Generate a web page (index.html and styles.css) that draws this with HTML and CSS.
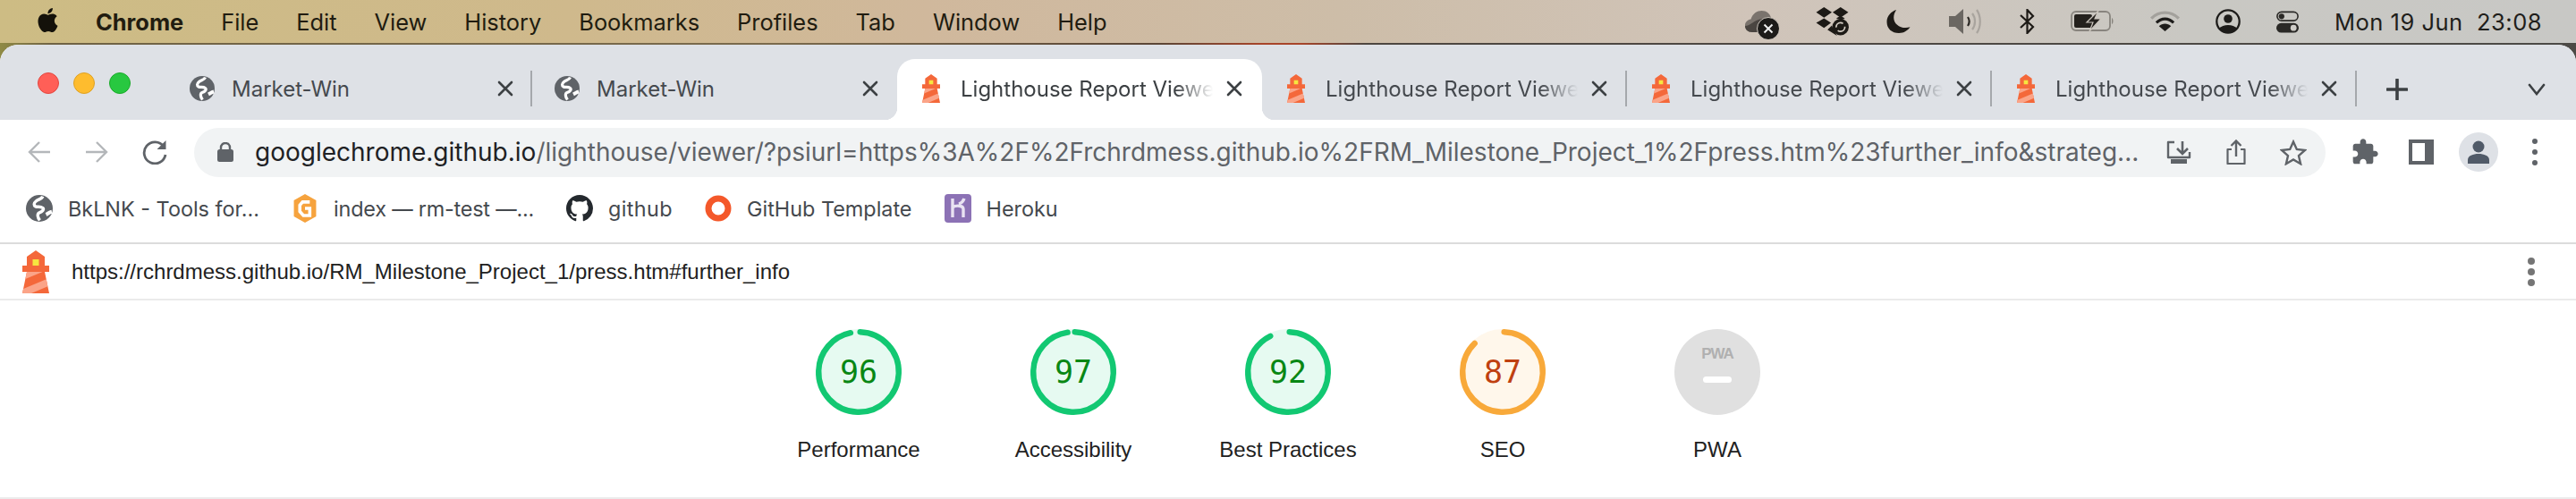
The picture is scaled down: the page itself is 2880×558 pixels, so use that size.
FILE: index.html
```html
<!DOCTYPE html>
<html lang="en">
<head>
<meta charset="utf-8">
<title>Lighthouse Report Viewer</title>
<link rel="stylesheet" href="styles.css">
</head>
<body>
<svg class="defs" width="0" height="0" aria-hidden="true">
  <defs>
    <symbol id="lh" viewBox="9 0 30 48">
      <path d="m14 7 10-7 10 7v10h5v7h-5l5 24H9l5-24H9v-7h5V7Z" fill="#F4683A"/>
      <path d="M31.561 24H14l-1.689 8.105L31.561 24ZM18.983 48H9l1.022-4.907L35.723 32.27l1.663 7.98L18.983 48Z" fill="#FBA488"/>
      <path fill="#F6E640" d="M20.5 10h7v7h-7z"/>
    </symbol>
    <symbol id="globe" viewBox="0 0 28 28">
      <circle cx="14" cy="14" r="14" fill="#5f6368"/>
      <path d="M17.500 1.500C16.500 4.500 13 4.500 10.500 6.500C8 8.500 8 11 10 12C12 13 15 11.500 17.500 13.500C19.500 15 17 17.500 14 18.500C11.500 19.500 12 23.500 14.500 26.500" fill="none" stroke="#fff" stroke-width="3.200"/>
      <path d="M21 20.500C23 19.500 24.500 18 27 17.500" fill="none" stroke="#fff" stroke-width="4"/>
    </symbol>
    <symbol id="close" viewBox="0 0 18 18">
      <path d="M2 2 16 16M16 2 2 16" stroke="#3c4043" stroke-width="2.600" stroke-linecap="round" fill="none"/>
    </symbol>
  </defs>
</svg>

<header class="menubar">
  <svg class="apple" viewBox="0 0 24 24"><path fill="#14110a" d="M12.152 6.896c-.948 0-2.415-1.078-3.96-1.04-2.04.027-3.91 1.183-4.961 3.014-2.117 3.675-.546 9.103 1.519 12.09 1.013 1.454 2.208 3.09 3.792 3.039 1.52-.065 2.09-.987 3.935-.987 1.831 0 2.35.987 3.96.948 1.637-.026 2.676-1.48 3.676-2.948 1.156-1.688 1.636-3.325 1.662-3.415-.039-.013-3.182-1.221-3.22-4.857-.026-3.04 2.48-4.494 2.597-4.559-1.429-2.09-3.623-2.324-4.39-2.376-2-.156-3.675 1.09-4.61 1.09zM15.53 3.83c.843-1.012 1.4-2.427 1.245-3.83-1.207.052-2.662.805-3.532 1.818-.78.896-1.454 2.338-1.273 3.714 1.338.104 2.715-.688 3.559-1.701"/></svg>
  <nav class="menus">
    <span class="menu-app">Chrome</span>
    <span>File</span><span>Edit</span><span>View</span><span>History</span><span>Bookmarks</span><span>Profiles</span><span>Tab</span><span>Window</span><span>Help</span>
  </nav>
  <div class="status">
    <svg class="st-cloud" viewBox="0 0 38 34">
      <path d="M8 26C3 26 0 22.500 0 18.500C0 14.500 3 12 6.500 11.500C8.500 5 13.500 2 18.500 2C24 2 28 5.500 29 10C33 11 36 14 36 18C36 22 33 26 28 26Z" fill="#7a736d"/>
      <path d="M0 19C6 19 10 12 19 11C27 10 32 12 36 18C36 22 33 26 28 26H8C3 26 0 23 0 19Z" fill="#4a4541"/>
      <circle cx="26" cy="22" r="12.500" fill="#1d1b19" stroke="#cdc6be" stroke-width="1"/>
      <path d="M21.500 17.500 30.500 26.500M30.500 17.500 21.500 26.500" stroke="#eee" stroke-width="2"/>
    </svg>
    <svg class="st-drop" viewBox="0 0 39 34">
      <path d="M10 0 19 6 10 12 1 6ZM29 0 38 6 29 12 20 6ZM10 13 18 18 10 24 1 18ZM19 21 20 24 25 33 14 26Z" fill="#1d1a16"/>
      <path d="M24 13 29 10 34 13 30 15Z" fill="#1d1a16"/>
      <circle cx="29" cy="23" r="9.500" fill="#1d1a16"/>
      <circle cx="29" cy="23" r="5" fill="none" stroke="#d6cfc6" stroke-width="1.800" stroke-dasharray="11 4"/>
    </svg>
    <svg class="st-moon" viewBox="0 0 30 28"><path d="M12 0C6 2 1 7 1 14C1 22 7 27 15 27C21 27 25 24 28 20C18 23 9 17 9 9C9 6 10 3 12 0Z" fill="#1d1a16"/></svg>
    <svg class="st-speaker" viewBox="0 0 40 34">
      <path d="M1 11H8L17 3V31L8 23H1Z" fill="#6b6762"/>
      <path d="M22 12C24 15 24 19 22 22" stroke="#2a2723" stroke-width="2.200" fill="none"/>
      <path d="M27 8C31 13 31 21 27 26M32 4C37 11 37 23 32 30" stroke="#a9a49e" stroke-width="2.200" fill="none"/>
    </svg>
    <svg class="st-bt" viewBox="0 0 17 28"><path d="M1 7 15 20 8.500 27V1L15 8 1 21" stroke="#1d1a16" stroke-width="2.200" fill="none"/></svg>
    <svg class="st-batt" viewBox="0 0 49 24">
      <rect x="1" y="1" width="43" height="21" rx="5" fill="none" stroke="#88847e" stroke-width="1.800"/>
      <rect x="4" y="4" width="20" height="15" rx="2" fill="#24211d"/>
      <path d="M46 8C48 9 48 14 46 15Z" fill="#88847e"/>
      <path d="M31 0 18 13H25L21 23 34 9H27Z" fill="#24211d" stroke="#cbc5bd" stroke-width="1.200"/>
    </svg>
    <svg class="st-wifi" viewBox="0 0 34 25">
      <path d="M1 9C10 0 24 0 33 9" stroke="#a3a19c" stroke-width="3.500" fill="none"/>
      <path d="M7 14C13 8 21 8 27 14" stroke="#1d1c1a" stroke-width="3.200" fill="none"/>
      <path d="M17 24 10 18C14 14 20 14 24 18Z" fill="#1d1c1a"/>
    </svg>
    <svg class="st-user" viewBox="0 0 28 28">
      <circle cx="14" cy="14" r="12.700" fill="none" stroke="#1d1c1a" stroke-width="2.300"/>
      <circle cx="14" cy="11" r="4.800" fill="#1d1c1a"/>
      <path d="M4 22C8 16.500 20 16.500 24 22C18 28 10 28 4 22Z" fill="#1d1c1a"/>
    </svg>
    <svg class="st-toggle" viewBox="0 0 28 27">
      <rect x="1" y="1" width="26" height="11" rx="5.500" fill="none" stroke="#2a2926" stroke-width="1.800"/>
      <circle cx="6.500" cy="6.500" r="3.500" fill="#2a2926"/>
      <rect y="15" width="28" height="12" rx="6" fill="#2a2926"/>
      <circle cx="21.500" cy="21" r="3.800" fill="#cfcdc8"/>
    </svg>
    <span class="clock">Mon 19 Jun&nbsp;&nbsp;23:08</span>
  </div>
</header>

<main class="window">
  <div class="tabstrip">
    <div class="traffic"><i class="light red"></i><i class="light amber"></i><i class="light green"></i></div>
    <div class="tab"><svg class="fav-globe"><use href="#globe"/></svg><span class="tab-title">Market-Win</span><svg class="tab-x"><use href="#close"/></svg><i class="tab-sep"></i></div>
    <div class="tab"><svg class="fav-globe"><use href="#globe"/></svg><span class="tab-title">Market-Win</span><svg class="tab-x"><use href="#close"/></svg><i class="tab-sep tab-sep-off"></i></div>
    <div class="tab tab-active"><svg class="fav-lh"><use href="#lh"/></svg><span class="tab-title tab-fade">Lighthouse Report Viewer</span><svg class="tab-x"><use href="#close"/></svg><i class="tab-sep tab-sep-off"></i></div>
    <div class="tab"><svg class="fav-lh"><use href="#lh"/></svg><span class="tab-title tab-fade">Lighthouse Report Viewer</span><svg class="tab-x"><use href="#close"/></svg><i class="tab-sep"></i></div>
    <div class="tab"><svg class="fav-lh"><use href="#lh"/></svg><span class="tab-title tab-fade">Lighthouse Report Viewer</span><svg class="tab-x"><use href="#close"/></svg><i class="tab-sep"></i></div>
    <div class="tab"><svg class="fav-lh"><use href="#lh"/></svg><span class="tab-title tab-fade">Lighthouse Report Viewer</span><svg class="tab-x"><use href="#close"/></svg><i class="tab-sep"></i></div>
    <svg class="newtab" viewBox="0 0 24 24"><path d="M12 1V23M1 12H23" stroke="#3c4043" stroke-width="3.600" stroke-linecap="round"/></svg>
    <svg class="tabmenu" viewBox="0 0 20 14"><path d="M2 2 10 12 18 2" stroke="#3c4043" stroke-width="2.600" fill="none" stroke-linecap="round"/></svg>
  </div>

  <div class="toolbar">
    <svg class="nav-btn" viewBox="0 0 26 26"><path d="M25 13H2M13 2 2 13 13 24" stroke="#b4b7ba" stroke-width="2.400" fill="none"/></svg>
    <svg class="nav-btn nav-fwd" viewBox="0 0 26 26"><path d="M1 13H24M13 2 24 13 13 24" stroke="#b4b7ba" stroke-width="2.400" fill="none"/></svg>
    <svg class="nav-btn nav-reload" viewBox="0 0 28 28"><path d="M24 8A12 12 0 1 0 26 17" stroke="#5f6368" stroke-width="2.800" fill="none"/><path d="M26.500 1V11H16.500Z" fill="#5f6368"/></svg>
    <div class="omnibox">
      <svg class="lock" viewBox="0 0 18 22"><path d="M4 9V6A5 5 0 0 1 14 6V9" stroke="#5f6368" stroke-width="2.400" fill="none"/><rect y="8" width="18" height="14" rx="2.500" fill="#5f6368"/></svg>
      <div class="url"><span class="url-host">googlechrome.github.io</span>/lighthouse/viewer/?psiurl=https%3A%2F%2Frchrdmess.github.io%2FRM_Milestone_Project_1%2Fpress.htm%23further_info&amp;strateg...</div>
      <svg class="omni-dl" viewBox="0 0 28 26"><path d="M9 2H2V19H26V13" stroke="#5f6368" stroke-width="2.400" fill="none" stroke-linejoin="round"/><path d="M18 1V14M12 9 18 15 24 9" stroke="#5f6368" stroke-width="2.600" fill="none"/><rect x="5" y="21" width="18" height="5" fill="#5f6368"/></svg>
      <svg class="omni-share" viewBox="0 0 22 28"><path d="M6 11H1.500V27H20.500V11H16" stroke="#5f6368" stroke-width="2.200" fill="none" stroke-linejoin="round"/><path d="M11 19V2M5.500 7 11 1.500 16.500 7" stroke="#5f6368" stroke-width="2.400" fill="none"/></svg>
      <svg class="omni-star" viewBox="0 0 30 29"><path d="M15 2.500 18.800 11 28 12 21 18.200 23.100 27.200 15 22.500 6.900 27.200 9 18.200 2 12 11.200 11Z" stroke="#5f6368" stroke-width="2.400" fill="none"/></svg>
    </div>
    <svg class="tool-puzzle" viewBox="0 0 24 24"><path fill="#5f6368" d="M20.500 11H19V7c0-1.100-.9-2-2-2h-4V3.500C13 2.120 11.880 1 10.500 1S8 2.120 8 3.500V5H4c-1.100 0-1.990.9-1.990 2v3.800H3.500c1.490 0 2.700 1.210 2.700 2.700s-1.210 2.700-2.700 2.700H2V20c0 1.100.9 2 2 2h3.800v-1.500c0-1.490 1.210-2.700 2.700-2.700 1.490 0 2.700 1.210 2.700 2.700V22H17c1.100 0 2-.9 2-2v-4h1.500c1.380 0 2.500-1.120 2.500-2.500S21.880 11 20.500 11z"/></svg>
    <div class="tool-panel"><i class="tool-panel-page"></i></div>
    <div class="avatar"><svg class="avatar-user" viewBox="0 0 24 26"><circle cx="12" cy="7" r="6.500" fill="#505a68"/><path d="M0 26V22C0 17 6 15 12 15S24 17 24 22V26Z" fill="#505a68"/></svg></div>
    <div class="tool-dots"><i></i><i></i><i></i></div>
  </div>

  <div class="bookmarks">
    <div class="bm"><svg class="bm-globe"><use href="#globe"/></svg><span>BkLNK - Tools for...</span></div>
    <div class="bm"><svg class="bm-icon" viewBox="0 0 30 36"><path d="M15 0 29 8V28L15 36 1 28V8Z" fill="#f6a33e"/><path d="M21 10H12L8.500 14V22L13 27H21V18H15" stroke="#fff" stroke-width="4" fill="none"/></svg><span class="bm-tight">index — rm-test —...</span></div>
    <div class="bm"><svg class="bm-icon" viewBox="0 0 16 16"><path fill="#24292e" d="M8 0C3.580 0 0 3.580 0 8c0 3.540 2.290 6.530 5.470 7.590.4.070.55-.17.55-.38 0-.19-.01-.82-.01-1.490-2.010.37-2.530-.49-2.690-.94-.09-.23-.48-.94-.82-1.130-.28-.15-.68-.52-.01-.53.63-.01 1.080.58 1.230.82.72 1.210 1.870.87 2.330.66.070-.52.28-.87.51-1.070-1.780-.2-3.640-.89-3.640-3.950 0-.87.31-1.590.82-2.150-.08-.2-.36-1.020.08-2.120 0 0 .67-.21 2.200.82.64-.18 1.320-.27 2-.27.68 0 1.360.09 2 .27 1.530-1.040 2.200-.82 2.200-.82.44 1.100.16 1.920.08 2.120.51.56.82 1.270.82 2.150 0 3.070-1.870 3.750-3.650 3.950.29.25.54.73.54 1.480 0 1.070-.01 1.930-.01 2.200 0 .21.15.46.55.38A8.013 8.013 0 0016 8c0-4.420-3.580-8-8-8z"/></svg><span class="bm-wide">github</span></div>
    <div class="bm"><svg class="bm-icon" viewBox="0 0 30 30"><circle cx="15" cy="15" r="11" fill="none" stroke="#f4582a" stroke-width="7"/></svg><span>GitHub Template</span></div>
    <div class="bm"><svg class="bm-icon" viewBox="0 0 30 32"><rect width="30" height="32" rx="4" fill="#8c72b5"/><path d="M9 5V26M9 15C12 12.500 21 12 21 17V26M22 5C21 8 19 10 16 11" stroke="#e9e3f2" stroke-width="3.400" fill="none"/></svg><span>Heroku</span></div>
  </div>

  <div class="lh-topbar">
    <svg class="lh-logo"><use href="#lh"/></svg>
    <a class="lh-url">https://rchrdmess.github.io/RM_Milestone_Project_1/press.htm#further_info</a>
    <div class="lh-dots"><i></i><i></i><i></i></div>
  </div>

  <section class="scores">
    <div class="score">
      <div class="gauge">
        <svg class="gauge-svg" viewBox="0 0 120 120"><circle class="g-base g-pass" cx="60" cy="60" r="56"/><circle class="g-arc g-pass" cx="60" cy="60" r="56" stroke-dasharray="337.800 351.860"/></svg>
        <span class="gauge-num t-pass">96</span>
      </div>
      <div class="score-label">Performance</div>
    </div>
    <div class="score">
      <div class="gauge">
        <svg class="gauge-svg" viewBox="0 0 120 120"><circle class="g-base g-pass" cx="60" cy="60" r="56"/><circle class="g-arc g-pass" cx="60" cy="60" r="56" stroke-dasharray="341.300 351.860"/></svg>
        <span class="gauge-num t-pass">97</span>
      </div>
      <div class="score-label">Accessibility</div>
    </div>
    <div class="score">
      <div class="gauge">
        <svg class="gauge-svg" viewBox="0 0 120 120"><circle class="g-base g-pass" cx="60" cy="60" r="56"/><circle class="g-arc g-pass" cx="60" cy="60" r="56" stroke-dasharray="323.700 351.860"/></svg>
        <span class="gauge-num t-pass">92</span>
      </div>
      <div class="score-label">Best Practices</div>
    </div>
    <div class="score">
      <div class="gauge">
        <svg class="gauge-svg" viewBox="0 0 120 120"><circle class="g-base g-avg" cx="60" cy="60" r="56"/><circle class="g-arc g-avg" cx="60" cy="60" r="56" stroke-dasharray="306.100 351.860"/></svg>
        <span class="gauge-num t-avg">87</span>
      </div>
      <div class="score-label">SEO</div>
    </div>
    <div class="score">
      <div class="gauge gauge-pwa">
        <span class="pwa-mark">PWA</span>
        <i class="pwa-dash"></i>
      </div>
      <div class="score-label">PWA</div>
    </div>
  </section>
</main>
</body>
</html>
```

FILE: styles.css
```css
* { box-sizing: border-box; }
html, body { margin: 0; padding: 0; }
body {
  width: 2880px;
  height: 558px;
  overflow: hidden;
  background: linear-gradient(90deg, #8f8a45 0, #6f6244 2%, #7a6a4c 30%, #5b4636 45%, #a8452a 49%, #a8452a 50.500%, #4d4640 53%, #4c4a46 100%);
  font-family: "Liberation Sans", Arial, sans-serif;
}
.defs { display: block; width: 0; height: 0; }
i { display: block; }

/* macOS menu bar */
.menubar {
  height: 48px;
  display: flex;
  align-items: center;
  padding-left: 40px;
  background: linear-gradient(90deg, #cdbc84 0, #cfb98c 22%, #d0b89c 36%, #cdbda8 52%, #d0c4b9 68%, #c9c8c3 85%, #c8c8c5 100%);
  font-family: Inter, "Liberation Sans", sans-serif;
  font-size: 25.400px;
  color: #211c10;
}
.apple { width: 27px; height: 33px; margin-top: -3px; flex: none; }
.menus { display: flex; gap: 42px; margin-left: 40px; }
.menu-app { font-weight: 700; }
.status { margin-left: auto; padding-right: 38px; display: flex; align-items: center; gap: 40px; }
.st-cloud { width: 38px; height: 34px; margin-top: 6px; }
.st-drop { width: 39px; height: 33px; }
.st-moon { width: 30px; height: 27px; }
.st-speaker { width: 40px; height: 34px; }
.st-bt { width: 17px; height: 28px; }
.st-batt { width: 49px; height: 24px; }
.st-wifi { width: 33px; height: 24px; }
.st-user { width: 28px; height: 28px; }
.st-toggle { width: 25px; height: 27px; }
.clock { white-space: nowrap; color: #1f1e1b; font-size: 25.500px; letter-spacing: 0.500px; }

/* Browser window */
.window {
  margin-top: 2px;
  height: 508px;
  background: #fff;
  border-radius: 20px 20px 0 0;
  overflow: hidden;
}
.tabstrip {
  height: 84px;
  display: flex;
  align-items: flex-end;
  background: #dee1e6;
}
.traffic {
  width: 187px;
  flex: none;
  align-self: flex-start;
  display: flex;
  gap: 16px;
  padding: 31px 0 0 42px;
}
.light { width: 24px; height: 24px; border-radius: 50%; }
.red { background: #ff5f57; border: 1px solid #e2463f; }
.amber { background: #febc2e; border: 1px solid #dea123; }
.green { background: #28c840; border: 1px solid #1aab29; }

.tab {
  width: 408px;
  height: 68px;
  flex: none;
  display: flex;
  align-items: center;
  position: relative;
  padding-left: 25px;
  color: #45494e;
  font-family: Inter, "Liberation Sans", sans-serif;
  font-size: 24px;
}
.tab-active {
  background: #fff;
  border-radius: 20px 20px 0 0;
  color: #3c4043;
}
.tab-active::before, .tab-active::after {
  content: "";
  position: absolute;
  bottom: 0;
  width: 14px;
  height: 14px;
}
.tab-active::before { left: -14px; background: radial-gradient(circle at 0 0, transparent 14px, #fff 14.500px); }
.tab-active::after { right: -14px; background: radial-gradient(circle at 100% 0, transparent 14px, #fff 14.500px); }
.tab-title { white-space: nowrap; overflow: hidden; width: 285px; flex: none; margin-top: -2px; }
.tab-fade { -webkit-mask-image: linear-gradient(90deg, #000 84%, transparent 99%); mask-image: linear-gradient(90deg, #000 84%, transparent 99%); }
.fav-globe { width: 28px; height: 28px; flex: none; margin-right: 19px; margin-top: -2px; }
.fav-lh { width: 20px; height: 32px; flex: none; margin-right: 23px; margin-left: 3px; margin-top: -2px; }
.tab-x { width: 18px; height: 18px; flex: none; margin-top: -2px; }
.tab .tab-title + .tab-x { margin-left: 12px; }
.tab-sep { width: 2px; height: 40px; background: #a5a8ac; margin-left: auto; margin-top: -3px; }
.tab-sep-off { visibility: hidden; }
.newtab { width: 24px; height: 24px; flex: none; margin: 0 0 22px 33px; }
.tabmenu { width: 20px; height: 14px; flex: none; margin: 0 0 27px 134px; }

/* Toolbar */
.toolbar {
  height: 72px;
  display: flex;
  align-items: center;
  padding-left: 31px;
  background: #fff;
}
.nav-btn { width: 26px; height: 26px; flex: none; }
.nav-fwd { margin-left: 38px; }
.nav-reload { margin-left: 38px; width: 28px; height: 28px; }
.omnibox {
  margin-left: 30px;
  width: 2383px;
  height: 55px;
  flex: none;
  border-radius: 28px;
  background: #f1f3f4;
  display: flex;
  align-items: center;
  padding-left: 26px;
}
.lock { width: 18px; height: 22px; flex: none; }
.url {
  margin-left: 24px;
  width: 2112px;
  flex: none;
  white-space: nowrap;
  overflow: hidden;
  font-family: Inter, "Liberation Sans", sans-serif;
  font-size: 28px;
  color: #5f6368;
}
.url-host { color: #202124; }
.omni-dl { width: 28px; height: 26px; flex: none; margin-left: 25px; }
.omni-share { width: 22px; height: 28px; flex: none; margin-left: 39px; }
.omni-star { width: 30px; height: 29px; flex: none; margin-left: 38px; }
.tool-puzzle { width: 32px; height: 32px; flex: none; margin-left: 28px; }
.tool-panel { width: 28px; height: 28px; flex: none; margin-left: 33px; background: #5f6368; padding: 4px 10px 4px 4px; }
.tool-panel-page { width: 14px; height: 20px; background: #fff; }
.avatar {
  width: 44px; height: 44px; flex: none; margin-left: 28px;
  border-radius: 50%; background: #dee1e6;
  display: flex; align-items: center; justify-content: center;
}
.avatar-user { width: 24px; height: 26px; }
.tool-dots { display: flex; flex-direction: column; gap: 6px; margin-left: 38px; }
.tool-dots i { width: 6px; height: 6px; border-radius: 50%; background: #5f6368; }

/* Bookmarks */
.bookmarks {
  height: 67px;
  padding: 0 0 11px 29px;
  display: flex;
  align-items: center;
  gap: 36px;
  background: #fff;
  border-bottom: 2px solid #dcdcdc;
  font-family: Inter, "Liberation Sans", sans-serif;
  font-size: 23.400px;
  color: #45494e;
}
.bm { display: flex; align-items: center; gap: 17px; white-space: nowrap; }
.bm-tight { letter-spacing: -0.200px; }
.bm-wide { letter-spacing: 0.400px; }
.bm-globe { width: 30px; height: 30px; flex: none; }
.bm-icon { width: 30px; height: 32px; flex: none; }

/* Lighthouse top bar */
.lh-topbar {
  height: 63px;
  display: flex;
  align-items: center;
  padding-left: 25px;
  padding-right: 46px;
  border-bottom: 2px solid #ebebeb;
  background: #fff;
}
.lh-logo { width: 30px; height: 48px; flex: none; }
.lh-url { margin-left: 25px; font-size: 24px; color: #212121; white-space: nowrap; }
.lh-dots { margin-left: auto; display: flex; flex-direction: column; gap: 4px; }
.lh-dots i { width: 8px; height: 8px; border-radius: 50%; background: #757575; }

/* Scores */
.scores {
  height: 222px;
  padding-top: 32px;
  display: flex;
  justify-content: center;
  border-bottom: 2px solid #ebebeb;
  background: #fff;
}
.score { width: 240px; display: flex; flex-direction: column; align-items: center; }
.gauge {
  width: 96px;
  height: 96px;
  display: grid;
  place-items: center;
}
.gauge > * { grid-area: 1 / 1; }
.gauge-svg { width: 96px; height: 96px; display: block; transform: rotate(-87.900deg); }
.g-base { stroke-width: 8; opacity: 0.1; }
.g-arc { stroke-width: 8; fill: none; stroke-linecap: round; }
.g-base.g-pass { fill: #12c872; stroke: #12c872; }
.g-base.g-avg { fill: #fdb040; stroke: #fdb040; }
.g-arc.g-pass { stroke: #12c872; }
.g-arc.g-avg { stroke: #f8a93a; }
.gauge-num { font-family: "DejaVu Sans Mono", monospace; font-size: 35px; line-height: 1; }
.t-pass { color: #0a7f0a; }
.t-avg { color: #b8340c; }
.gauge-pwa {
  background: #e0e0e0;
  border-radius: 50%;
  display: flex;
  flex-direction: column;
  align-items: center;
  padding-top: 18px;
}
.pwa-mark { font-size: 17px; font-weight: 700; letter-spacing: -1px; color: #b0b0b0; line-height: 20px; }
.pwa-dash { width: 32px; height: 7px; border-radius: 4px; background: #fff; margin-top: 15px; }
.score-label { margin-top: 25px; font-size: 24px; line-height: 28px; color: #212121; white-space: nowrap; }
```
